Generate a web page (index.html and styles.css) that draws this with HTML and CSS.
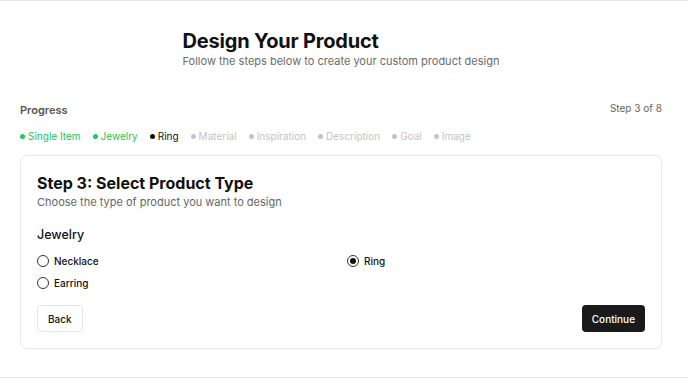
FILE: index.html
```html
<!DOCTYPE html>
<html lang="en">
<head>
    <meta charset="UTF-8">
    <meta name="viewport" content="width=device-width, initial-scale=1.0">
    <title>Design Your Product</title>
    <link rel="stylesheet" href="styles.css">
</head>
<body>
    <div class="page">
        <header class="hero">
            <div class="hero-inner">
                <h1>Design Your Product</h1>
                <p>Follow the steps below to create your custom product design</p>
            </div>
        </header>

        <div class="progress-head">
            <span class="progress-label">Progress</span>
            <span class="progress-count">Step 3 of 8</span>
        </div>

        <ul class="steps">
            <li class="done">Single Item</li>
            <li class="done">Jewelry</li>
            <li class="current">Ring</li>
            <li>Material</li>
            <li>Inspiration</li>
            <li>Description</li>
            <li>Goal</li>
            <li>Image</li>
        </ul>

        <div class="card">
            <h2>Step 3: Select Product Type</h2>
            <p class="card-sub">Choose the type of product you want to design</p>

            <h3>Jewelry</h3>
            <div class="options">
                <label class="option"><span class="radio"></span>Necklace</label>
                <label class="option"><span class="radio checked"></span>Ring</label>
                <label class="option"><span class="radio"></span>Earring</label>
            </div>

            <div class="actions">
                <button class="btn-back">Back</button>
                <button class="btn-next">Continue</button>
            </div>
        </div>
    </div>
</body>
</html>
```

FILE: styles.css
```css
body {
    margin: 0;
    background-color: #FFFFFF;
    color: #111111;
    font-family: 'Inter', 'Liberation Sans', sans-serif;
}
.page {
    border-top: 1px solid #e6e6e6;
    border-bottom: 1px solid #e6e6e6;
    height: 376px;
    padding: 0 26px 0 20px;
}
.hero {
    display: flex;
    justify-content: center;
    padding-top: 28px;
    height: 72px;
}
.hero h1 {
    font-size: 20px;
    font-weight: 700;
    margin: 0;
    line-height: 24px;
    letter-spacing: -0.2px;
}
.hero p {
    color: #6b6b6b;
    font-size: 11px;
    margin: 0;
    line-height: 16px;
}
.progress-head {
    display: flex;
    justify-content: space-between;
    align-items: center;
    margin-top: 0;
    height: 18px;
}
.progress-label {
    color: #555555;
    font-size: 11px;
    font-weight: 600;
}
.progress-count {
    color: #666666;
    font-size: 10px;
    margin-top: -4px;
}
.steps {
    display: flex;
    gap: 12px;
    list-style: none;
    margin: 9px 0 0 0;
    padding: 0;
    font-size: 10px;
    line-height: 16px;
    color: #c4c4c4;
}
.steps li {
    display: flex;
    align-items: center;
    gap: 3px;
}
.steps li::before {
    content: "";
    width: 5px;
    height: 5px;
    border-radius: 50%;
    background-color: #c4c4c4;
}
.steps li.done {
    color: #22c55e;
}
.steps li.done::before {
    background-color: #22c55e;
}
.steps li.current {
    color: #111111;
}
.steps li.current::before {
    background-color: #111111;
}
.card {
    margin-top: 11px;
    border: 1px solid #e8e8e8;
    border-radius: 6px;
    padding: 16px 16px 16px 16px;
}
.card h2 {
    font-size: 16px;
    font-weight: 700;
    margin: 0;
    line-height: 22px;
}
.card-sub {
    color: #666666;
    font-size: 11px;
    margin: 0;
    line-height: 16px;
}
.card h3 {
    font-size: 12.5px;
    font-weight: 500;
    margin: 16px 0 0 0;
    line-height: 18px;
}
.options {
    display: grid;
    grid-template-columns: 1fr 1fr;
    column-gap: 12px;
    row-gap: 6px;
    margin-top: 9px;
}
.option {
    display: flex;
    align-items: center;
    gap: 5px;
    font-size: 10px;
    font-weight: 500;
    line-height: 16px;
}
.radio {
    width: 10px;
    height: 10px;
    border: 1px solid #333333;
    border-radius: 50%;
    display: flex;
    align-items: center;
    justify-content: center;
}
.radio.checked::after {
    content: "";
    width: 6px;
    height: 6px;
    border-radius: 50%;
    background-color: #111111;
}
.actions {
    display: flex;
    justify-content: space-between;
    margin-top: 14px;
}
button {
    font-family: 'Inter', 'Liberation Sans', sans-serif;
    font-size: 10px;
    font-weight: 500;
    height: 27px;
    border-radius: 4px;
    cursor: pointer;
}
.btn-back {
    background-color: #FFFFFF;
    border: 1px solid #e6e6e6;
    color: #111111;
    padding: 0 10px;
}
.btn-next {
    background-color: #1a1a1a;
    border: none;
    color: #FFFFFF;
    padding: 0 10px;
}
```
